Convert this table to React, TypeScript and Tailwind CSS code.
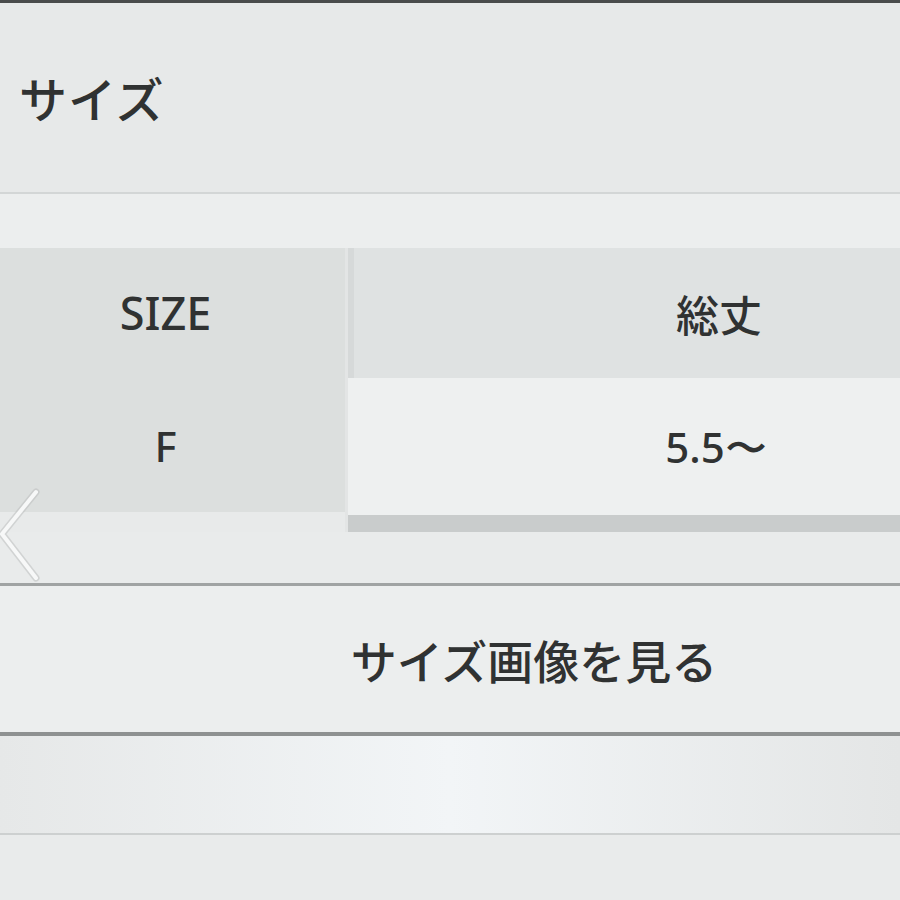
const jp = "font-['Noto_Sans_CJK_JP','Noto_Sans',sans-serif]";

function Chevron() {
  return (
    <svg className="absolute left-0 top-[486px]" width="44" height="100" viewBox="0 0 44 100">
      <polyline points="36,6 2,48 36,92" fill="none" stroke="#b9bcbc" strokeWidth="7" strokeLinecap="round" strokeLinejoin="round" opacity="0.5" />
      <polyline points="36,6 2,48 36,92" fill="none" stroke="#f7f8f8" strokeWidth="4" strokeLinecap="round" strokeLinejoin="round" />
    </svg>
  );
}

export default function App() {
  return (
    <div className={`relative w-[900px] h-[900px] overflow-hidden bg-[#e8eaea] text-[#303232] ${jp}`}>
      <div className="h-[3px] bg-[#4a4c4c]" />
      <div className="h-[189px] bg-[#e7e9e9] pl-[19px] pt-[70px]">
        <span className="text-[48px] font-medium leading-none tracking-[1px]">サイズ</span>
      </div>
      <div className="h-[2px] bg-[#d3d6d6]" />
      <div className="h-[54px] bg-[#eceeee]" />

      <div className="flex h-[284px]">
        <div className="w-[345px] shrink-0 flex flex-col">
          <div className="h-[130px] bg-[#dcdfde] flex items-center justify-center pr-[14px] font-['Noto_Sans',sans-serif] font-medium text-[45px]">
            SIZE
          </div>
          <div className="h-[134px] bg-[#dcdfde] flex items-center justify-center pr-[14px] font-['Noto_Sans',sans-serif] font-medium text-[42px]">
            F
          </div>
          <div className="flex-1 bg-[#e8eaea]" />
        </div>
        <div className="w-[3px] shrink-0 bg-[#e3e5e5]" />
        <div className="w-[736px] shrink-0 flex flex-col">
          <div className="h-[130px] bg-[#dfe2e2] border-l-[6px] border-[#d6d9d9] flex items-center justify-center font-medium text-[43px]">
            総丈
          </div>
          <div className="h-[137px] bg-[#eef0f0] flex items-center justify-center font-['Noto_Sans',sans-serif] font-medium text-[42px]">
            5.5〜
          </div>
          <div className="h-[17px] bg-[#c9cccc]" />
        </div>
      </div>

      <div className="h-[51px] bg-[#e9ebeb]" />
      <div className="h-[3px] bg-[#a0a3a3]" />
      <div className="h-[146px] bg-[#eceeee] flex items-center justify-center pl-[168px]">
        <span className="text-[46px] font-medium leading-none">サイズ画像を見る</span>
      </div>
      <div className="h-[4px] bg-[#8e9191]" />
      <div className="h-[97px] bg-gradient-to-r from-[#e6e8e8] via-[#f2f5f7] to-[#e4e6e6]" />
      <div className="h-[2px] bg-[#cdd0d0]" />
      <div className="h-[70px] bg-[#e9ebeb]" />

      <Chevron />
    </div>
  );
}
